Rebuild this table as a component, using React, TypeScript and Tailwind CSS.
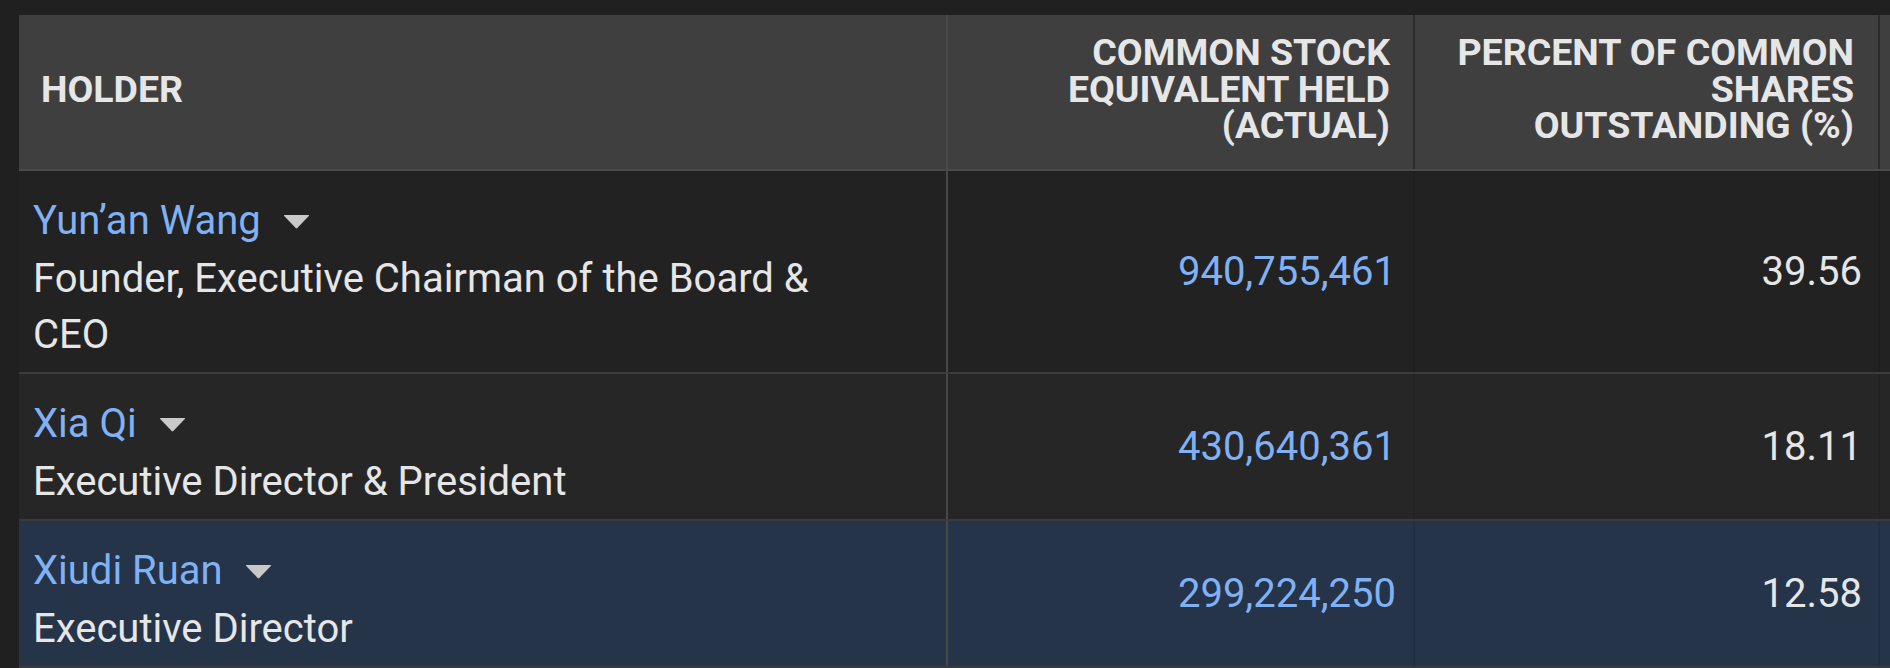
const holders = [
  {
    name: "Yun’an Wang",
    title: "Founder, Executive Chairman of the Board & CEO",
    shares: "940,755,461",
    pct: "39.56",
    rowBg: "bg-[#222222]",
    rowBorder: "border-[#3c3c3c]",
  },
  {
    name: "Xia Qi",
    title: "Executive Director & President",
    shares: "430,640,361",
    pct: "18.11",
    rowBg: "bg-[#262626]",
    rowBorder: "border-[#3a3a3a]",
  },
  {
    name: "Xiudi Ruan",
    title: "Executive Director",
    shares: "299,224,250",
    pct: "12.58",
    rowBg: "bg-[#253449]",
    rowBorder: "border-[#3a3a3a]",
  },
];

const Caret = () => (
  <svg width="27" height="15" viewBox="0 0 27 15" className="ml-[22px] shrink-0">
    <path d="M1.5 1 L25.5 1 Q26.5 1 25.8 1.9 L14.3 14 Q13.5 14.8 12.7 14 L1.2 1.9 Q0.5 1 1.5 1 Z" fill="#c9c9c9" />
  </svg>
);

const App = () => {
  return (
    <div className="w-screen h-screen bg-[#202020] pt-[15px] pl-[19px] overflow-hidden font-['Roboto',sans-serif]">
      <div className="flex flex-col">
        {/* header */}
        <div className="flex h-[156px] bg-[#3f3f3f] border-b-2 border-[#4a4a4a] text-[37.5px] leading-[36.5px] font-bold text-[#e6e6e6]">
          <div className="w-[929px] shrink-0 flex items-center pl-[22px] pb-[6px] border-r-2 border-[#4a4a4a]">
            HOLDER
          </div>
          <div className="w-[467px] shrink-0 flex items-center justify-end text-right pr-[23px] pb-[6px] border-r-2 border-[#2b2b2b]">
            <p>
              COMMON STOCK
              <br />
              EQUIVALENT HELD
              <br />
              (ACTUAL)
            </p>
          </div>
          <div className="w-[465px] shrink-0 flex items-center justify-end text-right pr-[24px] pb-[6px] border-r-2 border-[#2b2b2b]">
            <p>
              PERCENT OF COMMON
              <br />
              SHARES
              <br />
              OUTSTANDING (%)
            </p>
          </div>
          <div className="flex-1" />
        </div>

        {/* rows */}
        {holders.map((h) => (
          <div key={h.name} className={`flex border-b-2 ${h.rowBg} ${h.rowBorder} text-[40px]`}>
            <div className="w-[929px] shrink-0 pl-[14px] pt-[20px] pb-[9px] border-r-2 border-[#474747]">
              <div className="flex items-center leading-[60px]">
                <span className="text-[#80b1f5]">{h.name}</span>
                <Caret />
              </div>
              <p className="text-[#e6e6e6] leading-[56px] max-w-[840px]">{h.title}</p>
            </div>
            <div className="w-[467px] shrink-0 flex items-center justify-end pr-[17px] text-[#80b1f5] border-r-2 border-black/10">
              {h.shares}
            </div>
            <div className="w-[465px] shrink-0 flex items-center justify-end pr-[16px] text-[#e6e6e6] border-r-2 border-black/10">
              {h.pct}
            </div>
            <div className="flex-1" />
          </div>
        ))}
      </div>
    </div>
  );
};

export default App;
